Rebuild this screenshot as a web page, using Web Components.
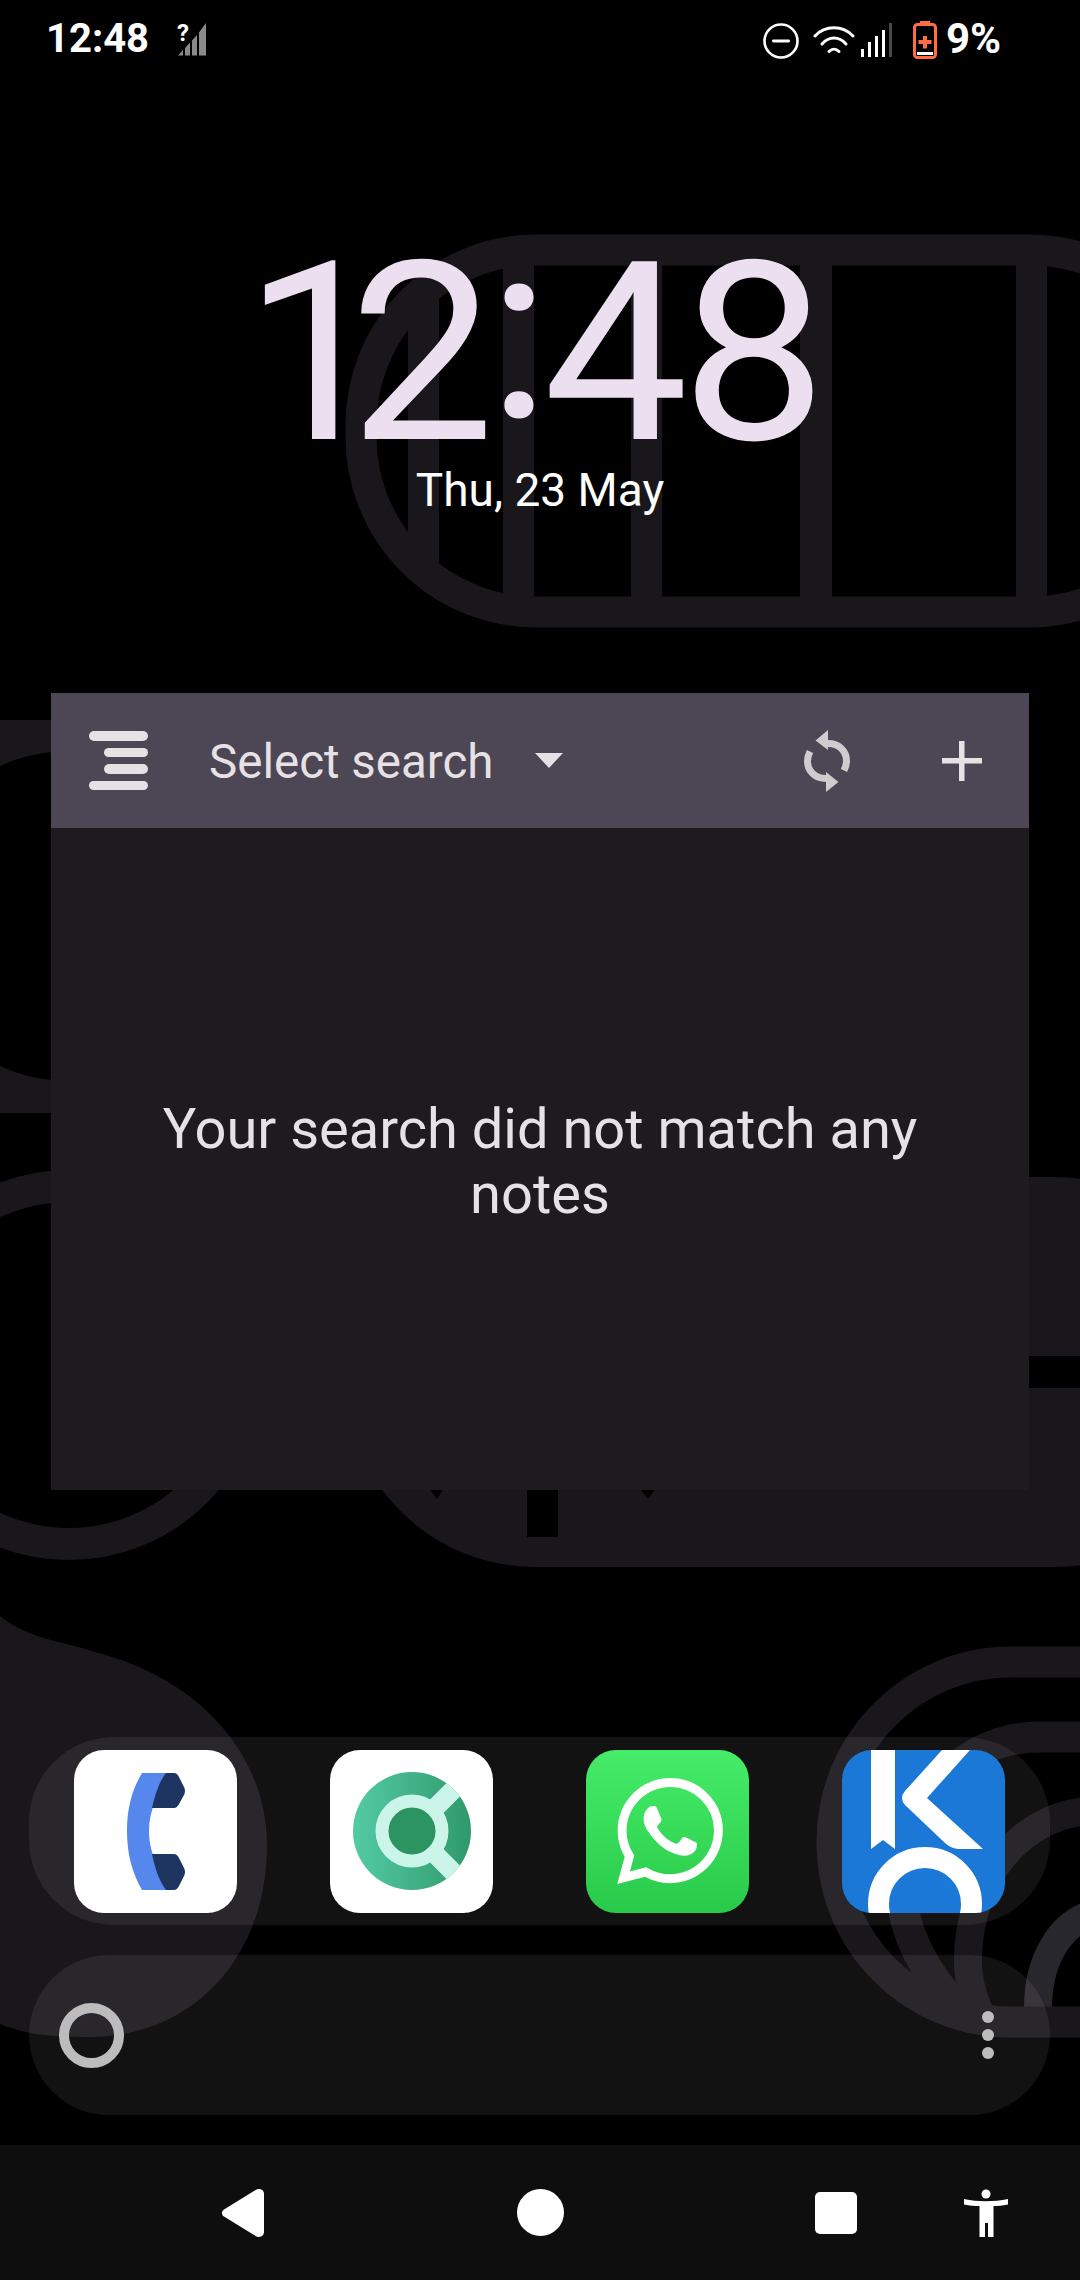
<!DOCTYPE html>
<html lang="en"><head><meta charset="utf-8"><title>Home screen</title>
<style>
html,body{margin:0;padding:0;background:#000;}
body{width:1080px;height:2280px;overflow:hidden;font-family:Roboto,"Liberation Sans",sans-serif;}
</style></head>
<body>
<phone-screen>
  <status-bar></status-bar>
  <lock-clock date="Thu, 23 May"></lock-clock>
  <notes-widget title-text="Select search" message="Your search did not match any notes"></notes-widget>
  <app-dock>
    <app-icon kind="phone"></app-icon>
    <app-icon kind="circle"></app-icon>
    <app-icon kind="whatsapp"></app-icon>
    <app-icon kind="ko"></app-icon>
  </app-dock>
  <search-pill></search-pill>
  <nav-bar></nav-bar>
</phone-screen>
<script>
function def(name, html){
  customElements.define(name, class extends HTMLElement{
    connectedCallback(){
      if(this.shadowRoot) return;
      const r=this.attachShadow({mode:'open'});
      r.innerHTML = typeof html==='function' ? html(this) : html;
    }
  });
}
const W='#19171b';
def('wall-paper',`<style>:host{position:absolute;inset:0;display:block}svg{display:block}</style>
<svg width="1080" height="2280" viewBox="0 0 1080 2280" xmlns="http://www.w3.org/2000/svg">
<defs><clipPath id="cap"><rect x="346" y="235" width="874" height="392" rx="190"/></clipPath></defs>
<g fill="${W}" clip-path="url(#cap)">
    <rect x="408" y="235" width="31" height="392"/>
    <rect x="503" y="235" width="31" height="392"/>
    <rect x="631" y="235" width="31" height="392"/>
    <rect x="800" y="235" width="32" height="392"/>
    <rect x="1016" y="235" width="31" height="392"/>
</g>
<rect x="361" y="250" width="844" height="362" rx="175" fill="none" stroke="${W}" stroke-width="31"/>
<path fill="${W}" fill-rule="evenodd" d="M0 720H60V1113H0ZM69 751a165 165 0 1 0 .01 0Z"/>
<circle cx="69" cy="1365" r="179" fill="none" stroke="${W}" stroke-width="32"/>
<rect x="345" y="1177" width="900" height="390" rx="190" fill="${W}"/>
<g fill="#000">
  <rect x="527" y="1470" width="31" height="67"/>
  <path d="M427 1485h19l-9 14zM637 1485h21l-10 14z"/>
  <rect x="1020" y="1356" width="60" height="32"/>
</g>
<path fill="${W}" d="M0 1616C30 1640 60 1640 95 1652C205 1680 267 1760 267 1845C267 1960 190 2037 90 2037C55 2037 25 2035 0 2024Z"/>
<g fill="none" stroke="${W}" stroke-width="31">
  <path stroke="#29272e" stroke-width="28" d="M1090 1915C1060 1925 1038 1960 1038 2008"/>
  <path d="M1090 1662H1010C915 1662 832 1740 832 1842C832 1945 915 2022 1010 2022H1090"/>
  <path d="M1090 1737H1040C950 1737 902 1820 902 1890C902 1930 925 1975 960 2010"/>
  <path stroke-width="28" d="M1090 1811C1020 1815 968 1880 968 1960C968 1985 975 2005 985 2022"/>
</g>
</svg>`);

def('phone-screen',`<style>:host{position:relative;display:flex;flex-direction:column;width:1080px;height:2280px;background:#000;overflow:hidden}
.c{position:relative;display:flex;flex-direction:column;height:100%}</style>
<wall-paper></wall-paper><div class="c"><slot></slot></div>`);

def('status-bar',`<style>:host{display:flex;align-items:center;height:78px;margin-bottom:-2px;padding:0 80px 0 46px;color:#fff;font:700 40px/40px Roboto,sans-serif}
.sp{flex:1}.t{display:block}svg{display:block}
.q{font-size:24px;line-height:24px;font-weight:700}
.left{position:relative;margin-left:28px;width:30px;height:34px}
.left span{position:absolute;left:0;top:-1px}
.pct{margin-left:9px;width:54px;font-size:42px}
</style>
<span class="t">12:48</span>
<div class="left"><svg width="30" height="34" viewBox="0 0 30 34" fill="#8a8a8a"><path d="M1 33.5L6 28V33.5ZM8 26L13 20.5V33.5H8ZM15 18.5L20 13V33.5H15ZM22 10.5L29 1V33.5H22Z"/></svg><span class="q">?</span></div>
<div class="sp"></div>
<svg width="36" height="36" viewBox="0 0 36 36" style="margin-top:4px"><circle cx="18" cy="18" r="16.5" fill="none" stroke="#fff" stroke-width="2.6"/><rect x="9" y="16.6" width="18" height="2.8" rx="1.4" fill="#fff"/></svg>
<svg width="42" height="32" viewBox="0 0 42 32" fill="none" stroke="#fff" stroke-width="3" style="margin-left:14px;margin-top:-1px" stroke-linecap="round"><path d="M2 13C12 2 30 2 40 13"/><path d="M9 21C16 13 26 13 33 21"/><path d="M16 28.5C19 25.5 23 25.5 26 28.5"/></svg>
<svg width="32" height="36" viewBox="0 0 32 36" style="margin-left:5px;margin-top:3px"><g fill="#fff"><rect x="1" y="26" width="3" height="8"/><rect x="8" y="19" width="3" height="15"/><rect x="15" y="13" width="3" height="21"/><rect x="22" y="7" width="3" height="27"/></g><rect x="29" y="0" width="3" height="34" fill="#4a4a4a"/></svg>
<svg width="24" height="38" viewBox="0 0 24 38" style="margin-left:21px;margin-top:2px"><rect x="7" y="0" width="10" height="5" fill="#ff6e40"/><rect x="1.5" y="3.5" width="21" height="33" rx="3" fill="#000" stroke="#ff6e40" stroke-width="3"/><rect x="4" y="31" width="16" height="3" fill="#fff"/><path fill="#ff6e40" d="M10 15h4v4h4.500v4H14v4.500h-4V23H5.500v-4H10z"/></svg>
<span class="pct">9%</span>`);

def('lock-clock',el=>`<style>:host{display:flex;flex-direction:column;align-items:center;height:270px;margin-top:178px;color:#fff;font-family:Roboto,sans-serif}
.t{font-size:250px;line-height:200px;font-weight:400;letter-spacing:-7px;color:#ece0f0;margin-left:-18px;white-space:nowrap;transform:scaleX(1.035)}
.t .o{letter-spacing:-38px}
.t .c{display:inline-block;transform:translateY(-22px)}
.d{font-size:46px;line-height:52px;margin-top:10px;white-space:nowrap}</style>
<div class="t"><span class="o">1</span>2<span class="c">:</span>48</div><div class="d">${el.getAttribute('date')}</div>`);

def('notes-widget',el=>`<style>:host{display:flex;flex-direction:column;margin:169px 51px 0;height:797px;background:#1d1b1e;font-family:Roboto,sans-serif;color:#e6e1e5}
.h{display:flex;align-items:center;height:135px;background:#4d4655;padding:0 47px 0 38px}
.menu{display:flex;flex-direction:column;align-items:flex-end;gap:7px;width:59px}
.menu i{display:block;height:9.5px;border-radius:5px;background:#e6e1e5;width:100%}
.menu i.s{width:44px}
.title{font-size:47.500px;line-height:52px;margin:3px 0 0 61px;white-space:nowrap}
.caret{margin-left:41px;width:28px;height:15px;display:block}
.sp{flex:1}
.sync{display:block;margin-right:92px}
.plus{display:block}
.b{flex:1;display:flex;align-items:center;justify-content:center;text-align:center;padding:6px 100px 0}
.m{font-size:56px;line-height:65px}</style>
<div class="h">
  <div class="menu"><i></i><i class="s"></i><i class="s"></i><i></i></div>
  <span class="title">${el.getAttribute('title-text')}</span>
  <svg class="caret" viewBox="0 0 28 15"><path d="M0 0H28L14 15Z" fill="#e6e1e5"/></svg>
  <div class="sp"></div>
  <svg class="sync" width="46" height="62" viewBox="0 0 46 62" fill="none"><g stroke="#cfcbcf" stroke-width="7"><path d="M24 13.5C35 13.5 42.500 21 42.500 31C42.500 34.500 41.500 37.500 40 40.500"/><path d="M22 48.500C11 48.500 3.500 41 3.500 31C3.500 27.500 4.500 24.500 6 21.500"/></g><path d="M24 0V20L11.500 10.500Z" fill="#cfcbcf"/><path d="M22 42V62L34.500 52Z" fill="#cfcbcf"/></svg>
  <svg class="plus" width="40" height="40" viewBox="0 0 40 40"><path d="M17 0h5.500v17H40v5.500H22.500V40H17V22.500H0V17h17z" fill="#e6e1e5"/></svg>
</div>
<div class="b"><div class="m">${el.getAttribute('message')}</div></div>`);

def('app-dock',`<style>:host{display:flex;justify-content:space-between;align-items:center;box-sizing:border-box;margin:247px 30px 0 29px;height:188px;padding:0 45px;border-radius:85px;background:rgba(255,255,255,.07)}</style><slot></slot>`);

const ICONS={
phone:`<rect width="163" height="163" fill="#fff"/>
<path fill="#5587ec" d="M68 23H100C88 36 75 56 75 81C75 106 88 126 100 140H68C59 124 53 106 53 81C53 56 59 38 68 23Z"/>
<path fill="#1f3561" d="M92 23H100Q103 23 105 27L110 37Q112 41 110 45L105 54Q103 58 100 58H78C81 45 85 32 92 23Z"/>
<path fill="#1f3561" d="M78 104H100Q103 104 105 108L110 118Q112 122 110 126L105 136Q103 140 100 140H92C85 131 81 118 78 104Z"/>`,
circle:`<defs><linearGradient id="g" x1="0" x2="1" y1="0" y2="0"><stop offset="0" stop-color="#54cba4"/><stop offset="1" stop-color="#2f996b"/></linearGradient><clipPath id="cl"><circle cx="82" cy="81" r="59"/></clipPath></defs>
<rect width="163" height="163" fill="#fff"/>
<circle cx="82" cy="81" r="59" fill="url(#g)"/>
<g clip-path="url(#cl)" stroke="#ccf5ea" stroke-width="19"><path d="M82 81L150 13M82 81L150 149"/></g>
<circle cx="82" cy="81" r="30" fill="#2b9460" stroke="#ccf5ea" stroke-width="13"/>`,
whatsapp:`<defs><linearGradient id="w" x1="0" x2="0" y1="0" y2="1"><stop offset="0" stop-color="#46ec69"/><stop offset="1" stop-color="#28cb49"/></linearGradient></defs>
<rect width="163" height="163" fill="url(#w)"/>
<g transform="translate(31 28) scale(4.42)"><path fill="#fff" d="M17.472 14.382c-.297-.149-1.758-.867-2.03-.967-.273-.099-.471-.148-.67.15-.197.297-.767.966-.94 1.164-.173.199-.347.223-.644.075-.297-.15-1.255-.463-2.39-1.475-.883-.788-1.48-1.761-1.653-2.059-.173-.297-.018-.458.13-.606.134-.133.298-.347.446-.52.149-.174.198-.298.298-.497.099-.198.05-.371-.025-.52-.075-.149-.669-1.612-.916-2.207-.242-.579-.487-.5-.669-.51-.173-.008-.371-.01-.57-.01-.198 0-.52.074-.792.372-.272.297-1.04 1.016-1.04 2.479 0 1.462 1.065 2.875 1.213 3.074.149.198 2.096 3.2 5.077 4.487.709.306 1.262.489 1.694.625.712.227 1.36.195 1.871.118.571-.085 1.758-.719 2.006-1.413.248-.694.248-1.289.173-1.413-.074-.124-.272-.198-.57-.347m-5.421 7.403h-.004a9.87 9.87 0 01-5.031-1.378l-.361-.214-3.741.982.998-3.648-.235-.374a9.86 9.86 0 01-1.51-5.26c.001-5.45 4.436-9.884 9.888-9.884 2.64 0 5.122 1.03 6.988 2.898a9.825 9.825 0 012.893 6.994c-.003 5.45-4.437 9.884-9.885 9.884m8.413-18.297A11.815 11.815 0 0012.05 0C5.495 0 .16 5.335.157 11.892c0 2.096.547 4.142 1.588 5.945L.057 24l6.305-1.654a11.882 11.882 0 005.683 1.448h.005c6.554 0 11.89-5.335 11.893-11.893a11.821 11.821 0 00-3.48-8.413z"/></g>`,
ko:`<rect width="163" height="163" fill="#1b78d6"/>
<path fill="#fff" d="M29 0H53V99L41 90L29 99Z"/>
<path fill="#fff" d="M100 0H128L85 48L141 99H116Q108 98 103 93L63 55Q57 48 63 41Z"/>
<circle cx="83" cy="154" r="46.5" fill="none" stroke="#fff" stroke-width="21"/>`
};
def('app-icon',el=>`<style>:host{display:block;width:163px;height:163px;border-radius:30px;overflow:hidden}svg{display:block}</style>
<svg width="163" height="163" viewBox="0 0 163 163" xmlns="http://www.w3.org/2000/svg">${ICONS[el.getAttribute('kind')]}</svg>`);

def('search-pill',`<style>:host{display:flex;align-items:center;justify-content:space-between;box-sizing:border-box;margin:30px 30px 0 29px;height:160px;padding:0 56px 0 30px;border-radius:80px;background:rgba(255,255,255,.07)}
.o{width:65px;height:65px;box-sizing:border-box;border:10px solid #bcbcbc;border-radius:50%}
.d{display:flex;flex-direction:column;gap:6px}.d i{display:block;width:12px;height:12px;border-radius:50%;background:#bdbdbd}</style>
<div class="o"></div><div class="d"><i></i><i></i><i></i></div>`);

def('nav-bar',`<style>:host{display:flex;align-items:center;height:135px;margin-top:30px;background:#0e0e0e;padding:0 73px 0 222px;box-sizing:border-box}svg{display:block;flex:none}</style>
<svg width="42" height="48" viewBox="0 0 42 48"><path fill="#fff" d="M34 .8C37.500-1 42 .8 42 5V43C42 47.200 37.500 49 34 47.200L2 27.500C-.7 25.500-.7 22.500 2 20.500Z"/></svg>
<svg width="47" height="47" viewBox="0 0 47 47" style="margin-left:253px"><circle cx="23.500" cy="23.500" r="23.500" fill="#fff"/></svg>
<svg width="42" height="42" viewBox="0 0 42 42" style="margin-left:251px"><rect width="42" height="42" rx="5" fill="#fff"/></svg>
<svg width="44" height="48" viewBox="0 0 44 48" style="margin-left:107px"><circle cx="22" cy="5" r="4.500" fill="#fff"/><path fill="#fff" d="M0 10C14 13 30 13 44 10L44 15.500C38 16.500 34 17 29.500 17V48H24V34H21V48H15.500V17C10 17 6 16.500 0 15.500Z"/></svg>`);
</script>
</body></html>
